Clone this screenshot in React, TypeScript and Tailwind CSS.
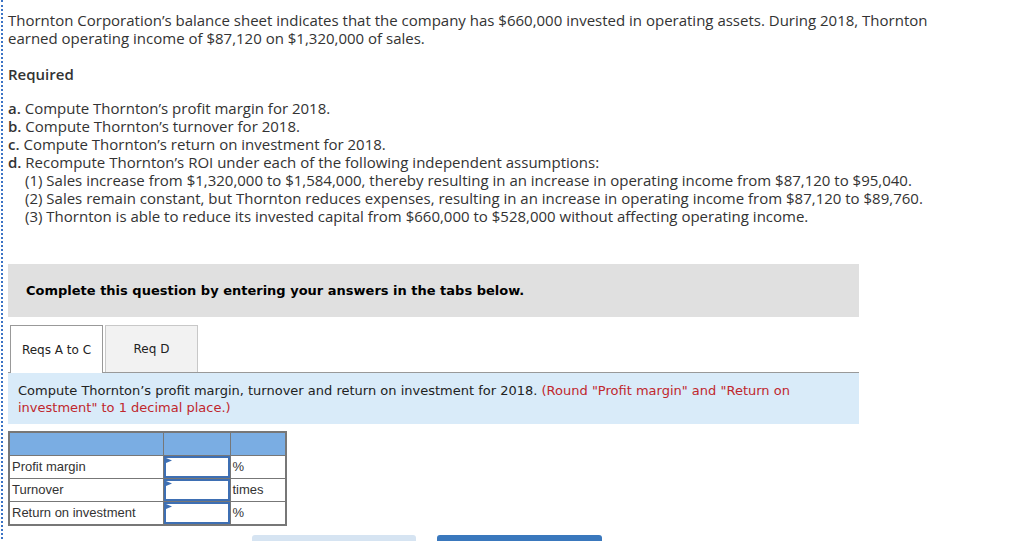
import React from 'react';

const rows = [
  { label: 'Profit margin', unit: '%' },
  { label: 'Turnover', unit: 'times' },
  { label: 'Return on investment', unit: '%' },
];

function AnswerCell() {
  return (
    <td className="relative border border-[#777] p-0">
      <div className="relative h-[22px] border-2 border-[#3e6fb3] bg-white">
        <svg className="absolute left-0 top-0" width="6" height="6" viewBox="0 0 6 6">
          <polygon points="0,0 6,2.5 0,5" fill="#3e6fb3" />
        </svg>
      </div>
    </td>
  );
}

export default function App() {
  return (
    <div className="min-h-[541px] bg-white">
      <div className="ml-px min-h-[541px] border-l-2 border-dotted border-[#3b73c5] pl-[5px] pt-[11px] text-[15px] leading-[18px] text-[#333] font-['Open_Sans',sans-serif]">
        <p className="max-w-[935px]">
          Thornton Corporation’s balance sheet indicates that the company has $660,000 invested in operating assets. During 2018, Thornton earned operating income of $87,120 on $1,320,000 of sales.
        </p>

        <p className="mt-[18px] font-semibold">Required</p>

        <div className="mt-[16px]">
          <p><b className="font-semibold">a.</b> Compute Thornton’s profit margin for 2018.</p>
          <p><b className="font-semibold">b.</b> Compute Thornton’s turnover for 2018.</p>
          <p><b className="font-semibold">c.</b> Compute Thornton’s return on investment for 2018.</p>
          <p><b className="font-semibold">d.</b> Recompute Thornton’s ROI under each of the following independent assumptions:</p>
          <div className="pl-[17px]">
            <p>(1) Sales increase from $1,320,000 to $1,584,000, thereby resulting in an increase in operating income from $87,120 to $95,040.</p>
            <p>(2) Sales remain constant, but Thornton reduces expenses, resulting in an increase in operating income from $87,120 to $89,760.</p>
            <p>(3) Thornton is able to reduce its invested capital from $660,000 to $528,000 without affecting operating income.</p>
          </div>
        </div>

        <div className="mt-[39px] w-[851px] font-['DejaVu_Sans',sans-serif]">
          <div className="flex h-[53px] items-center bg-[#e0e0e0] pl-[18px] text-[13px] font-bold text-black">
            Complete this question by entering your answers in the tabs below.
          </div>

          <div className="mt-[8px] flex gap-[2px] pl-[2px] text-[12px] text-[#222]">
            <div className="-mb-px flex h-[48px] w-[93px] items-center justify-center border border-b-0 border-[#999] bg-white">
              Reqs A to C
            </div>
            <div className="flex h-[47px] w-[93px] items-center justify-center border border-b-0 border-[#c8c8c8] bg-[#f2f2f2]">
              Req D
            </div>
          </div>

          <div className="h-[52px] border-t border-[#999] bg-[#d9ebf9] px-[10px] pt-[9px] text-[13px] leading-[17px] text-[#222]">
            Compute Thornton’s profit margin, turnover and return on investment for 2018.{' '}
            <span className="text-[#c0272d]">(Round "Profit margin" and "Return on investment" to 1 decimal place.)</span>
          </div>
        </div>

        <table className="mt-[7px] border-collapse border-2 border-[#777] font-['Liberation_Sans',sans-serif] text-[13px] leading-[15px] text-[#333]">
          <thead>
            <tr className="h-[23px] bg-[#7aade3]">
              <th className="w-[154px] border border-[#777]"></th>
              <th className="w-[67px] border border-[#777]"></th>
              <th className="w-[56px] border border-[#777]"></th>
            </tr>
          </thead>
          <tbody>
            {rows.map((r) => (
              <tr key={r.label} className="h-[23px]">
                <td className="border border-[#777] px-[2px]">{r.label}</td>
                <AnswerCell />
                <td className="border border-[#777] px-[2px]">{r.unit}</td>
              </tr>
            ))}
          </tbody>
        </table>

        <div className="mt-[9px] flex gap-[21px] pl-[244px]">
          <div className="h-[20px] w-[164px] rounded-t-[3px] bg-[#d6e4f2]"></div>
          <div className="h-[20px] w-[165px] rounded-t-[3px] bg-[#3a78bd]"></div>
        </div>
      </div>
    </div>
  );
}
